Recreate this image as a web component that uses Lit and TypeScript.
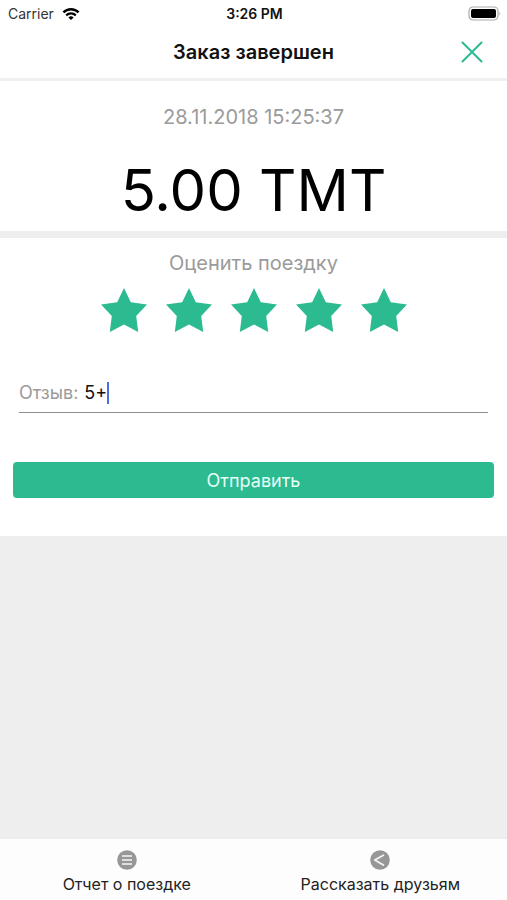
import { LitElement, html, css, svg } from "lit";
import { customElement, state } from "lit/decorators.js";

@customElement("star-rating")
class StarRating extends LitElement {
  @state() private value = 5;

  static styles = css`
    :host { display: block; }
    .group { margin: 0; padding: 0; border: 0; min-width: 0; }
    .title {
      width: 100%;
      padding: 0;
      text-align: center;
      font-size: 20px;
      line-height: 26px;
      color: #9a9a9a;
    }
    .stars { display: flex; justify-content: center; gap: 19px; padding-top: 12px; }
    .star { position: relative; display: block; width: 46px; height: 44px; cursor: pointer; }
    .radio { position: absolute; inset: 0; width: 100%; height: 100%; margin: 0; opacity: 0; cursor: pointer; }
    .shape { display: block; width: 46px; height: 44px; fill: #d8d8d8; }
    .on .shape { fill: #2cba91; }
  `;

  render() {
    return html`
      <fieldset class="group">
        <legend class="title">Оценить поездку</legend>
        <div class="stars">
          ${[1, 2, 3, 4, 5].map(
            (n) => html`
              <label class="star ${n <= this.value ? "on" : ""}">
                <input
                  class="radio"
                  type="radio"
                  name="rating"
                  aria-label=${String(n)}
                  .checked=${n === this.value}
                  @change=${() => (this.value = n)}
                />
                <svg class="shape" viewBox="0 0 46 44" aria-hidden="true">
                  <path d="M23 0 L29.8 14.2 L46 16.6 L35.2 28 L37.2 44 L23 36.6 L8.8 44 L10.8 28 L0 16.6 L16.2 14.2 Z" />
                </svg>
              </label>
            `
          )}
        </div>
      </fieldset>
    `;
  }
}

const wifi = svg`
  <path d="M1.4 5.4 A10.6 10.6 0 0 1 16.6 5.4" fill="none" stroke="#000" stroke-width="2.4" />
  <path d="M4.2 8.4 A6.8 6.8 0 0 1 13.8 8.4" fill="none" stroke="#000" stroke-width="2.2" />
  <path d="M9 13 L6.4 10.4 A3.8 3.8 0 0 1 11.6 10.4 Z" />
`;

@customElement("app-root")
class AppRoot extends LitElement {
  @state() private review = "5+";

  static styles = css`
    :host {
      display: flex;
      flex-direction: column;
      min-height: 100vh;
      background: #eeeeee;
      color: #000;
      font-family: Inter, "Liberation Sans", sans-serif;
    }
    .status {
      display: grid;
      grid-template-columns: 1fr auto 1fr;
      align-items: center;
      height: 28px;
      padding: 0 6px 0 8px;
      background: #fff;
      font-size: 14px;
      line-height: 18px;
    }
    .carrier { display: flex; align-items: center; gap: 8px; color: #333; }
    .wifi { width: 18px; height: 14px; }
    .time { font-weight: 600; color: #111; }
    .battery { justify-self: end; width: 33px; height: 16px; }
    .nav {
      display: grid;
      grid-template-columns: 24px 1fr 24px;
      align-items: center;
      height: 48px;
      padding: 0 23px 2px;
      background: #fff;
      border-bottom: 3px solid #f0f0f0;
    }
    .heading {
      grid-column: 2;
      margin: 0;
      text-align: center;
      font-size: 20px;
      line-height: 26px;
      font-weight: 600;
      color: #111;
    }
    .close { display: block; width: 24px; height: 24px; padding: 0; border: 0; background: none; cursor: pointer; }
    .cross { display: block; width: 24px; height: 24px; }
    .total { padding: 23px 16px 5px; background: #fff; text-align: center; }
    .date { margin: 0; font-size: 20px; line-height: 26px; color: #9a9a9a; }
    .price { margin: 24px 0 0; font-size: 58px; line-height: 72px; }
    .form { margin-top: 7px; padding: 12px 13px 38px; background: #fff; }
    .field {
      display: flex;
      align-items: center;
      margin: 49px 6px 0;
      height: 32px;
      padding-bottom: 8px;
      box-sizing: border-box;
      border-bottom: 1px solid #8e8e8e;
      font-size: 18px;
      line-height: 24px;
      cursor: text;
    }
    .label { color: #9a9a9a; margin-right: 6px; }
    .input {
      field-sizing: content;
      padding: 0;
      border: 0;
      outline: 0;
      background: none;
      font: inherit;
      color: #111;
      caret-color: transparent;
    }
    .caret { width: 2px; height: 22px; background: #4a6fe3; }
    .send {
      display: block;
      width: 100%;
      height: 36px;
      margin-top: 49px;
      padding: 2px 0 0;
      border: 0;
      border-radius: 4px;
      background: #2cba91;
      color: #e6fff6;
      font: inherit;
      font-size: 18px;
      line-height: 24px;
      cursor: pointer;
    }
    .tabs { display: flex; margin-top: auto; background: #fdfdfd; }
    .tab {
      flex: 1;
      display: flex;
      flex-direction: column;
      align-items: center;
      gap: 4px;
      padding: 11px 0 6px;
      border: 0;
      background: none;
      font: inherit;
      font-size: 16px;
      line-height: 20px;
      color: #222;
      cursor: pointer;
    }
    .icon { width: 20px; height: 20px; }
  `;

  render() {
    return html`
      <div class="status">
        <span class="carrier">
          Carrier
          <svg class="wifi" viewBox="0 0 18 14" aria-hidden="true">${wifi}</svg>
        </span>
        <span class="time">3:26 PM</span>
        <svg class="battery" viewBox="0 0 33 16" aria-hidden="true">
          <rect x="1" y="1" width="29" height="13" rx="4" fill="#fff" stroke="#aaa" stroke-width="1.2" />
          <rect x="3" y="3" width="25" height="9" rx="2" />
          <path d="M31.5 5.5 Q33 7.5 31.5 9.5 Z" fill="#999" />
        </svg>
      </div>
      <header class="nav">
        <h1 class="heading">Заказ завершен</h1>
        <button class="close" type="button" aria-label="Закрыть">
          <svg class="cross" viewBox="0 0 24 24" aria-hidden="true">
            <path d="M2.5 2.5 L21.5 21.5 M21.5 2.5 L2.5 21.5" stroke="#2cba91" stroke-width="2" fill="none" stroke-linecap="round" />
          </svg>
        </button>
      </header>
      <section class="total">
        <p class="date">28.11.2018 15:25:37</p>
        <p class="price">5.00 TMT</p>
      </section>
      <form class="form" @submit=${(e: Event) => e.preventDefault()}>
        <star-rating></star-rating>
        <div class="field">
          <label class="label" for="review">Отзыв:</label>
          <input
            class="input"
            id="review"
            type="text"
            autocomplete="off"
            .value=${this.review}
            @input=${(e: Event) => (this.review = (e.target as HTMLInputElement).value)}
          />
          <span class="caret"></span>
        </div>
        <button class="send" type="submit">Отправить</button>
      </form>
      <nav class="tabs">
        <button class="tab" type="button">
          <svg class="icon" viewBox="0 0 20 20" aria-hidden="true">
            <circle cx="10" cy="10" r="9.8" fill="#979797" />
            <path d="M5 6 H15 M5 10 H15 M5 14 H15" stroke="#dedede" stroke-width="1.8" />
          </svg>
          Отчет о поездке
        </button>
        <button class="tab" type="button">
          <svg class="icon" viewBox="0 0 20 20" aria-hidden="true">
            <circle cx="10" cy="10" r="9.8" fill="#979797" />
            <path d="M13.4 5.2 L4.8 10 L13.4 15" stroke="#f4f4f4" stroke-width="1.8" fill="none" stroke-linecap="round" stroke-linejoin="round" />
          </svg>
          Рассказать друзьям
        </button>
      </nav>
    `;
  }
}
